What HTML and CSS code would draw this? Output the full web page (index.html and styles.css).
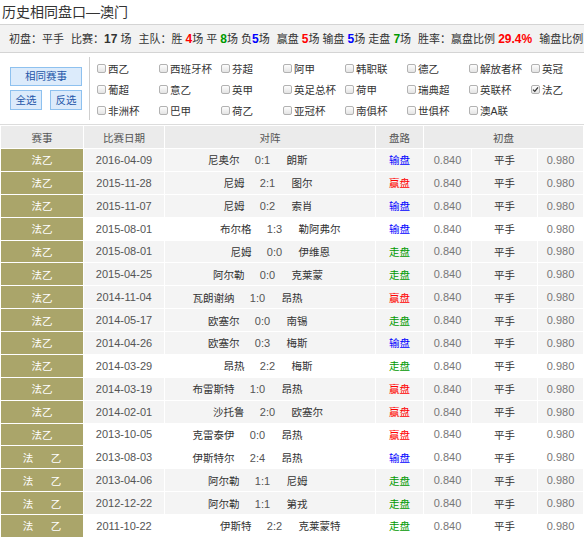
FILE: index.html
```html
<!DOCTYPE html>
<html lang="zh-CN">
<head>
    <meta charset="UTF-8">
    <meta name="viewport" content="width=device-width, initial-scale=1.0">
    <title>历史相同盘口—澳门</title>
    <link rel="stylesheet" href="styles.css">
</head>
<body>
    <div class="page">
        <h2 class="title">历史相同盘口—澳门</h2>

        <!-- 统计 -->
        <div class="summary">
            <span>初盘：平手</span>
            <span>比赛：<b>17</b> 场</span>
            <span>主队：胜 <b class="red">4</b>场 平 <b class="green">8</b>场 负<b class="blue">5</b>场</span>
            <span>赢盘 <b class="red">5</b>场 输盘 <b class="blue">5</b>场 走盘 <b class="green">7</b>场</span>
            <span>胜率：赢盘比例 <b class="red">29.4%</b></span>
            <span>输盘比例 <b class="blue">29.4%</b></span>
        </div>

        <!-- 赛事筛选 -->
        <div class="filter">
            <div class="actions">
                <button class="btn btn-wide">相同赛事</button>
                <div class="btn-row">
                    <button class="btn">全选</button>
                    <button class="btn">反选</button>
                </div>
            </div>
            <div class="filter-sep"></div>
            <div class="leagues">
                <label class="league"><span class="cb"></span>西乙</label>
                <label class="league"><span class="cb"></span>西班牙杯</label>
                <label class="league"><span class="cb"></span>芬超</label>
                <label class="league"><span class="cb"></span>阿甲</label>
                <label class="league"><span class="cb"></span>韩职联</label>
                <label class="league"><span class="cb"></span>德乙</label>
                <label class="league"><span class="cb"></span>解放者杯</label>
                <label class="league"><span class="cb"></span>英冠</label>

                <label class="league"><span class="cb"></span>葡超</label>
                <label class="league"><span class="cb"></span>意乙</label>
                <label class="league"><span class="cb"></span>英甲</label>
                <label class="league"><span class="cb"></span>英足总杯</label>
                <label class="league"><span class="cb"></span>荷甲</label>
                <label class="league"><span class="cb"></span>瑞典超</label>
                <label class="league"><span class="cb"></span>英联杯</label>
                <label class="league"><span class="cb on"><svg width="7" height="7" viewBox="0 0 7 7"><path d="M1 3.6 L2.8 5.4 L6 1.4" fill="none" stroke="#333" stroke-width="1.3"/></svg></span>法乙</label>

                <label class="league"><span class="cb"></span>非洲杯</label>
                <label class="league"><span class="cb"></span>巴甲</label>
                <label class="league"><span class="cb"></span>荷乙</label>
                <label class="league"><span class="cb"></span>亚冠杯</label>
                <label class="league"><span class="cb"></span>南俱杯</label>
                <label class="league"><span class="cb"></span>世俱杯</label>
                <label class="league"><span class="cb"></span>澳A联</label>
            </div>
        </div>

        <!-- 历史列表 -->
        <table class="hist">
            <colgroup>
                <col class="c-lg"><col class="c-date"><col class="c-vs"><col class="c-res">
                <col class="c-odd"><col class="c-pan"><col>
            </colgroup>
            <thead>
                <tr><th>赛事</th><th>比赛日期</th><th>对阵</th><th>盘路</th><th colspan="3">初盘</th></tr>
            </thead>
            <tbody>
                <tr><td class="lg">法乙</td><td class="date">2016-04-09</td><td class="vs"><div class="match sh-n1"><span class="h">尼奥尔</span><span class="s">0:1</span><span class="a">朗斯</span></div></td><td class="blue">输盘</td><td class="num">0.840</td><td class="pan">平手</td><td class="num">0.980</td></tr>
                <tr><td class="lg">法乙</td><td class="date">2015-11-28</td><td class="vs"><div class="match sh-0"><span class="h">尼姆</span><span class="s">2:1</span><span class="a">图尔</span></div></td><td class="red">赢盘</td><td class="num">0.840</td><td class="pan">平手</td><td class="num">0.980</td></tr>
                <tr><td class="lg">法乙</td><td class="date">2015-11-07</td><td class="vs"><div class="match sh-0"><span class="h">尼姆</span><span class="s">0:2</span><span class="a">索肖</span></div></td><td class="blue">输盘</td><td class="num">0.840</td><td class="pan">平手</td><td class="num">0.980</td></tr>
                <tr class="hl"><td class="lg">法乙</td><td class="date">2015-08-01</td><td class="vs"><div class="match sh-p1"><span class="h">布尔格</span><span class="s">1:3</span><span class="a">勒阿弗尔</span></div></td><td class="blue">输盘</td><td class="num">0.840</td><td class="pan">平手</td><td class="num">0.980</td></tr>
                <tr><td class="lg">法乙</td><td class="date">2015-08-01</td><td class="vs"><div class="match sh-p1"><span class="h">尼姆</span><span class="s">0:0</span><span class="a">伊维恩</span></div></td><td class="green">走盘</td><td class="num">0.840</td><td class="pan">平手</td><td class="num">0.980</td></tr>
                <tr><td class="lg">法乙</td><td class="date">2015-04-25</td><td class="vs"><div class="match sh-0"><span class="h">阿尔勒</span><span class="s">0:0</span><span class="a">克莱蒙</span></div></td><td class="green">走盘</td><td class="num">0.840</td><td class="pan">平手</td><td class="num">0.980</td></tr>
                <tr><td class="lg">法乙</td><td class="date">2014-11-04</td><td class="vs"><div class="match sh-n2"><span class="h">瓦朗谢纳</span><span class="s">1:0</span><span class="a">昂热</span></div></td><td class="red">赢盘</td><td class="num">0.840</td><td class="pan">平手</td><td class="num">0.980</td></tr>
                <tr><td class="lg">法乙</td><td class="date">2014-05-17</td><td class="vs"><div class="match sh-n1"><span class="h">欧塞尔</span><span class="s">0:0</span><span class="a">南锡</span></div></td><td class="green">走盘</td><td class="num">0.840</td><td class="pan">平手</td><td class="num">0.980</td></tr>
                <tr><td class="lg">法乙</td><td class="date">2014-04-26</td><td class="vs"><div class="match sh-n1"><span class="h">欧塞尔</span><span class="s">0:3</span><span class="a">梅斯</span></div></td><td class="blue">输盘</td><td class="num">0.840</td><td class="pan">平手</td><td class="num">0.980</td></tr>
                <tr class="hl"><td class="lg">法乙</td><td class="date">2014-03-29</td><td class="vs"><div class="match sh-0"><span class="h">昂热</span><span class="s">2:2</span><span class="a">梅斯</span></div></td><td class="green">走盘</td><td class="num">0.840</td><td class="pan">平手</td><td class="num">0.980</td></tr>
                <tr><td class="lg">法乙</td><td class="date">2014-03-19</td><td class="vs"><div class="match sh-n2"><span class="h">布雷斯特</span><span class="s">1:0</span><span class="a">昂热</span></div></td><td class="red">赢盘</td><td class="num">0.840</td><td class="pan">平手</td><td class="num">0.980</td></tr>
                <tr><td class="lg">法乙</td><td class="date">2014-02-01</td><td class="vs"><div class="match sh-0"><span class="h">沙托鲁</span><span class="s">2:0</span><span class="a">欧塞尔</span></div></td><td class="red">赢盘</td><td class="num">0.840</td><td class="pan">平手</td><td class="num">0.980</td></tr>
                <tr class="hl"><td class="lg">法乙</td><td class="date">2013-10-05</td><td class="vs"><div class="match sh-n2"><span class="h">克雷泰伊</span><span class="s">0:0</span><span class="a">昂热</span></div></td><td class="red">赢盘</td><td class="num">0.840</td><td class="pan">平手</td><td class="num">0.980</td></tr>
                <tr class="hl"><td class="lg">法&nbsp;&nbsp;&nbsp;&nbsp;&nbsp;&nbsp;乙</td><td class="date">2013-08-03</td><td class="vs"><div class="match sh-n2"><span class="h">伊斯特尔</span><span class="s">2:4</span><span class="a">昂热</span></div></td><td class="blue">输盘</td><td class="num">0.840</td><td class="pan">平手</td><td class="num">0.980</td></tr>
                <tr><td class="lg">法&nbsp;&nbsp;&nbsp;&nbsp;&nbsp;&nbsp;乙</td><td class="date">2013-04-06</td><td class="vs"><div class="match sh-n1"><span class="h">阿尔勒</span><span class="s">1:1</span><span class="a">尼姆</span></div></td><td class="green">走盘</td><td class="num">0.840</td><td class="pan">平手</td><td class="num">0.980</td></tr>
                <tr><td class="lg">法&nbsp;&nbsp;&nbsp;&nbsp;&nbsp;&nbsp;乙</td><td class="date">2012-12-22</td><td class="vs"><div class="match sh-n1"><span class="h">阿尔勒</span><span class="s">1:1</span><span class="a">第戎</span></div></td><td class="green">走盘</td><td class="num">0.840</td><td class="pan">平手</td><td class="num">0.980</td></tr>
                <tr class="hl"><td class="lg">法&nbsp;&nbsp;&nbsp;&nbsp;&nbsp;&nbsp;乙</td><td class="date">2011-10-22</td><td class="vs"><div class="match sh-p1"><span class="h">伊斯特</span><span class="s">2:2</span><span class="a">克莱蒙特</span></div></td><td class="green">走盘</td><td class="num">0.840</td><td class="pan">平手</td><td class="num">0.980</td></tr>
            </tbody>
        </table>
    </div>
</body>
</html>
```

FILE: styles.css
```css
/* 历史相同盘口 */
body {
    margin: 0;
    font-family: "Liberation Sans", "Noto Sans CJK SC", sans-serif;
    font-size: 10.5px;
    color: #333;
    background: #fff;
    overflow: hidden;
}

.page {
    width: 584px;
    overflow: hidden;
}

.title {
    margin: 0;
    padding-left: 2px;
    height: 24px;
    line-height: 24px;
    font-size: 14px;
    font-weight: normal;
    color: #333;
}

.red { color: #f00; }
.blue { color: #00f; }
.green { color: #090; }

/* 统计栏 */
.summary {
    display: flex;
    gap: 7px;
    height: 27px;
    line-height: 29px;
    padding-left: 9px;
    border-top: 1px solid #d4d4d4;
    border-bottom: 1px solid #d4d4d4;
    background: #f2f2f2;
    font-size: 11px;
    white-space: nowrap;
}

.summary b {
    font-size: 12px;
    font-weight: bold;
}

/* 筛选 */
.filter {
    display: flex;
    height: 71px;
    border-bottom: 1px solid #dcdcdc;
}

.actions {
    flex-shrink: 0;
    width: 72px;
    padding: 14px 7px 0 10px;
}

.btn {
    display: block;
    height: 19px;
    padding: 0;
    border: 1px solid #8ec1ef;
    background: #dcebfb;
    color: #2456a8;
    font: 10.5px "Liberation Sans", "Noto Sans CJK SC", sans-serif;
    line-height: 17px;
    text-align: center;
}

.btn-wide {
    width: 72px;
}

.btn-row {
    display: flex;
    justify-content: space-between;
    margin-top: 4px;
}

.btn-row .btn {
    width: 32px;
    height: 20px;
}

.filter-sep {
    flex-shrink: 0;
    width: 1px;
    margin: 4px 0;
    background: #cfcfcf;
}

.leagues {
    flex-shrink: 0;
    display: grid;
    grid-template-columns: repeat(8, 62px);
    grid-auto-rows: 21px;
    padding: 5px 0 0 7px;
}

.league {
    display: flex;
    align-items: center;
    white-space: nowrap;
    color: #333;
}

.cb {
    display: inline-flex;
    align-items: center;
    justify-content: center;
    box-sizing: border-box;
    width: 9px;
    height: 9px;
    margin-right: 2px;
    border: 1px solid #b2b2b2;
    border-radius: 2px;
    background: linear-gradient(#fdfdfd, #e4e4e4);
}

/* 列表 */
.hist {
    width: 584px;
    table-layout: fixed;
    border-collapse: separate;
    border-spacing: 1px;
    background: #fff;
}

.c-lg { width: 82px; }
.c-date { width: 80px; }
.c-vs { width: 210px; }
.c-res { width: 47px; }
.c-odd { width: 47px; }
.c-pan { width: 65px; }

.hist th,
.hist td {
    height: 21.88px;
    padding: 0;
    text-align: center;
    font-weight: normal;
    white-space: nowrap;
    overflow: hidden;
}

.hist th {
    height: 22px;
    background: #ebebeb;
    color: #555;
}

.hist td {
    background: #f4f4f4;
    color: #777;
}

.hist tr.hl td {
    background: #fff;
}

.hist tr td.lg {
    background: #aaa56a;
    color: #fff;
}

.hist td.date,
.hist td.num {
    font-size: 11px;
}

.hist td.date {
    color: #555;
}

.hist td.pan,
.hist td.vs {
    color: #333;
}

.hist td.red { color: #f00; }
.hist td.blue { color: #00f; }
.hist td.green { color: #090; }

.match {
    display: grid;
    grid-template-columns: 1fr 46px 1fr;
    align-items: baseline;
}

.match .h { text-align: right; }
.match .s { text-align: center; color: #555; font-size: 11px; }
.match .a { text-align: left; padding-left: 1px; }

.sh-0 { padding-right: 5px; }
.sh-n1 { padding-right: 15px; }
.sh-n2 { padding-right: 25px; }
.sh-p1 { padding-left: 9px; }
```
